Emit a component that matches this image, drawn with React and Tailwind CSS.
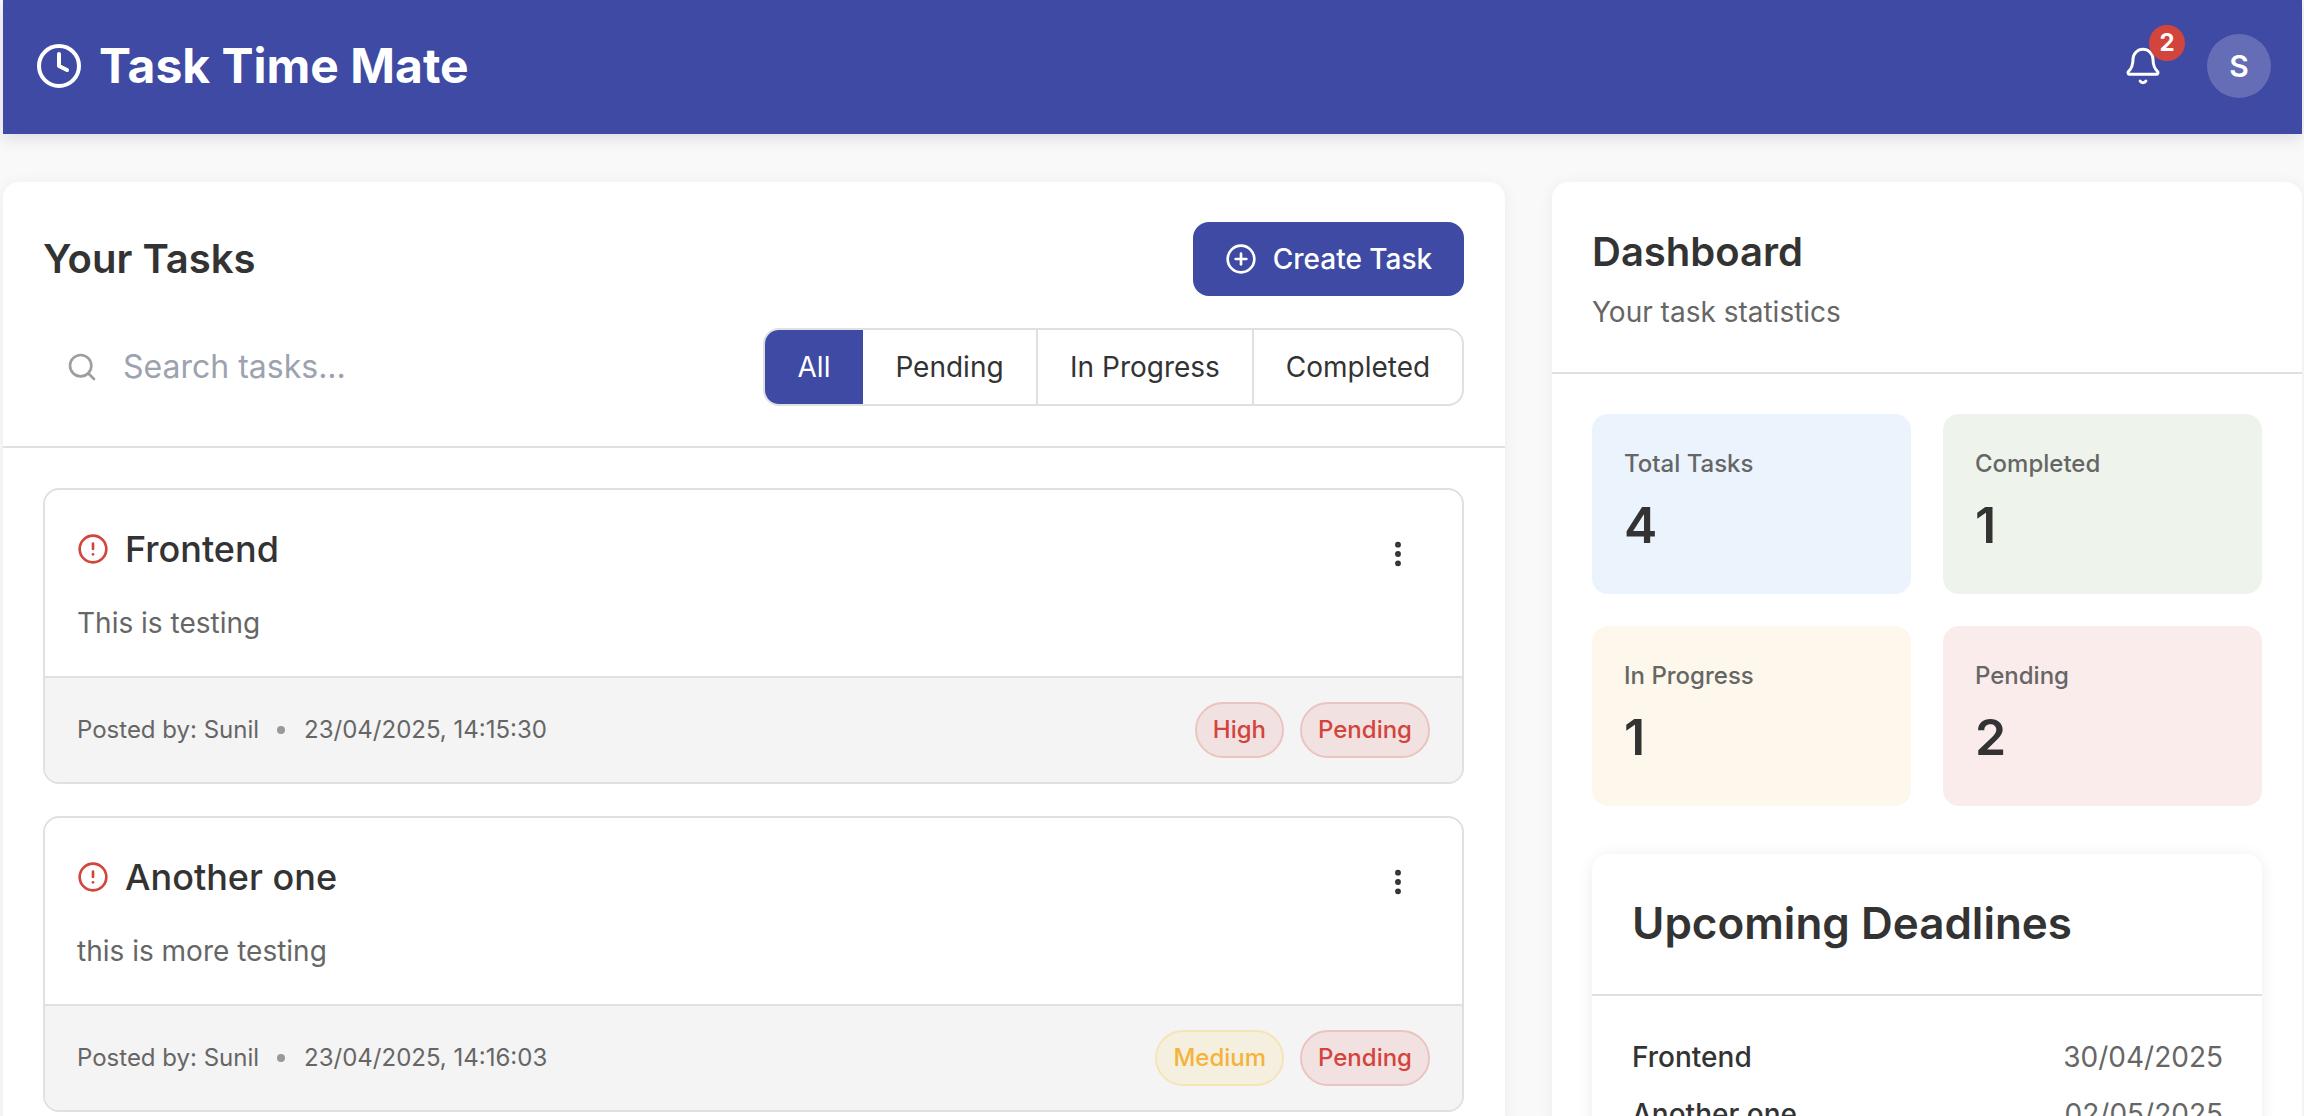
import { Bell, CircleAlert, CirclePlus, Clock, EllipsisVertical, Search } from "lucide-react";

const tasks = [
  { title: "Frontend", desc: "This is testing", date: "23/04/2025, 14:15:30", priority: "High" },
  { title: "Another one", desc: "this is more testing", date: "23/04/2025, 14:16:03", priority: "Medium" },
];

const stats = [
  { label: "Total Tasks", value: 4, bg: "bg-[#ebf3fc]" },
  { label: "Completed", value: 1, bg: "bg-[#eef4ec]" },
  { label: "In Progress", value: 1, bg: "bg-[#fef8ec]" },
  { label: "Pending", value: 2, bg: "bg-[#fbecec]" },
];

const deadlines = [
  { title: "Frontend", date: "30/04/2025" },
  { title: "Another one", date: "02/05/2025" },
];

const Badge = ({ kind, children }) => (
  <span
    className={`flex h-[56px] items-center rounded-full border-2 px-[16px] text-[24px] font-medium ${
      kind === "medium"
        ? "border-[#f6e4b7] bg-[#f5efe0] text-[#f4b33b]"
        : "border-[#ebc4c1] bg-[#f2e1e1] text-[#d2443c]"
    }`}
  >
    {children}
  </span>
);

const TaskCard = ({ task }) => (
  <div className="flex h-[296px] flex-col overflow-hidden rounded-[16px] border-2 border-[#e0e0e0]">
    <div className="flex flex-1 flex-col px-[32px] pt-[31px]">
      <div className="flex h-[56px] items-center justify-between">
        <div className="flex items-center gap-[16px]">
          <CircleAlert size={32} strokeWidth={2} className="text-[#d2443c]" />
          <h3 className="text-[36px] font-medium text-[#333]">{task.title}</h3>
        </div>
        <EllipsisVertical size={32} strokeWidth={2.4} className="mr-[16px] mt-[10px] text-[#333]" />
      </div>
      <p className="mt-[25px] text-[28px] text-[#666]">{task.desc}</p>
    </div>
    <div className="flex h-[106px] items-center justify-between border-t-2 border-[#e0e0e0] bg-[#f4f4f4] pl-[32px] pr-[32px]">
      <div className="flex items-center text-[24px] text-[#666]">
        <span>Posted by: Sunil</span>
        <span className="ml-[18px] mr-[19px] h-[8px] w-[8px] rounded-full bg-[#999]"></span>
        <span>{task.date}</span>
      </div>
      <div className="flex gap-[16px]">
        <Badge kind={task.priority.toLowerCase()}>{task.priority}</Badge>
        <Badge kind="pending">Pending</Badge>
      </div>
    </div>
  </div>
);

const App = () => {
  return (
    <div className="h-[1116px] overflow-hidden bg-[#f9f9f9] pl-[3px] pr-[2px] font-['Inter',sans-serif] text-[#333]">
      <header className="flex h-[134px] items-center justify-between bg-[#3e4aa3] pb-[2px] pl-[32px] pr-[31px] text-white shadow-[0_4px_16px_rgba(0,0,0,0.12)]">
        <div className="flex items-center gap-[16px]">
          <Clock size={48} strokeWidth={2} />
          <h1 className="text-[48px] font-bold">Task Time Mate</h1>
        </div>
        <div className="flex items-center gap-[44px]">
          <div className="relative">
            <Bell size={40} strokeWidth={1.8} />
            <span className="absolute right-[-22px] top-[-21px] flex h-[36px] w-[36px] items-center justify-center rounded-full bg-[#d2443c] text-[24px] font-bold">
              2
            </span>
          </div>
          <div className="flex h-[64px] w-[64px] items-center justify-center rounded-full bg-[#646db5] text-[30px] font-semibold">
            S
          </div>
        </div>
      </header>

      <main className="mt-[48px] grid grid-cols-[1502px_750px] gap-[47px]">
        <section className="rounded-[16px] bg-white shadow-[0_2px_16px_rgba(0,0,0,0.06)]">
          <div className="border-b-2 border-[#e0e0e0] pb-[40px] pl-[40px] pr-[41px] pt-[40px]">
            <div className="flex items-center justify-between">
              <h2 className="text-[40px] font-semibold">Your Tasks</h2>
              <button className="flex h-[74px] w-[271px] items-center justify-center gap-[16px] rounded-[16px] bg-[#3e4aa3] text-[28px] font-medium text-white">
                <CirclePlus size={32} strokeWidth={2} />
                Create Task
              </button>
            </div>
            <div className="mt-[32px] flex items-center justify-between">
              <div className="flex items-center gap-[25px] pl-[23px] text-[32px] text-[#9ca3af]">
                <Search size={32} strokeWidth={2} className="text-[#9e9e9e]" />
                <span>Search tasks...</span>
              </div>
              <div className="flex h-[78px] w-[701px] overflow-hidden rounded-[16px] border-2 border-[#e0e0e0] text-[28px]">
                <div className="flex w-[98px] items-center justify-center bg-[#3e4aa3] text-white">All</div>
                <div className="flex w-[175px] items-center justify-center border-r-2 border-[#e0e0e0]">Pending</div>
                <div className="flex w-[216px] items-center justify-center border-r-2 border-[#e0e0e0]">In Progress</div>
                <div className="flex flex-1 items-center justify-center">Completed</div>
              </div>
            </div>
          </div>
          <div className="flex flex-col gap-[32px] pl-[40px] pr-[41px] pt-[40px]">
            {tasks.map((task) => (
              <TaskCard key={task.title} task={task} />
            ))}
          </div>
        </section>

        <aside className="rounded-[16px] bg-white shadow-[0_2px_16px_rgba(0,0,0,0.06)]">
          <div className="border-b-2 border-[#e0e0e0] px-[40px] pb-[39px] pt-[40px]">
            <h2 className="text-[40px] font-semibold">Dashboard</h2>
            <p className="mt-[9px] text-[28px] text-[#666]">Your task statistics</p>
          </div>
          <div className="px-[40px] pt-[40px]">
            <div className="grid grid-cols-2 gap-x-[32px] gap-y-[32px]">
              {stats.map((stat) => (
                <div key={stat.label} className={`h-[180px] rounded-[16px] px-[32px] pt-[32px] ${stat.bg}`}>
                  <div className="text-[24px] font-medium text-[#666]">{stat.label}</div>
                  <div className="mt-[6px] text-[50px] font-semibold">{stat.value}</div>
                </div>
              ))}
            </div>
            <div className="mt-[48px] rounded-[16px] bg-white shadow-[0_2px_16px_rgba(0,0,0,0.08)]">
              <div className="border-b-2 border-[#e0e0e0] px-[40px] pb-[38px] pt-[36px]">
                <h3 className="text-[44px] font-semibold">Upcoming Deadlines</h3>
              </div>
              <div className="flex flex-col gap-[15px] pl-[40px] pr-[39px] pt-[40px] text-[28px]">
                {deadlines.map((row) => (
                  <div key={row.title} className="flex justify-between">
                    <span className="font-medium">{row.title}</span>
                    <span className="text-[#666]">{row.date}</span>
                  </div>
                ))}
              </div>
            </div>
          </div>
        </aside>
      </main>
    </div>
  );
};

export default App;
